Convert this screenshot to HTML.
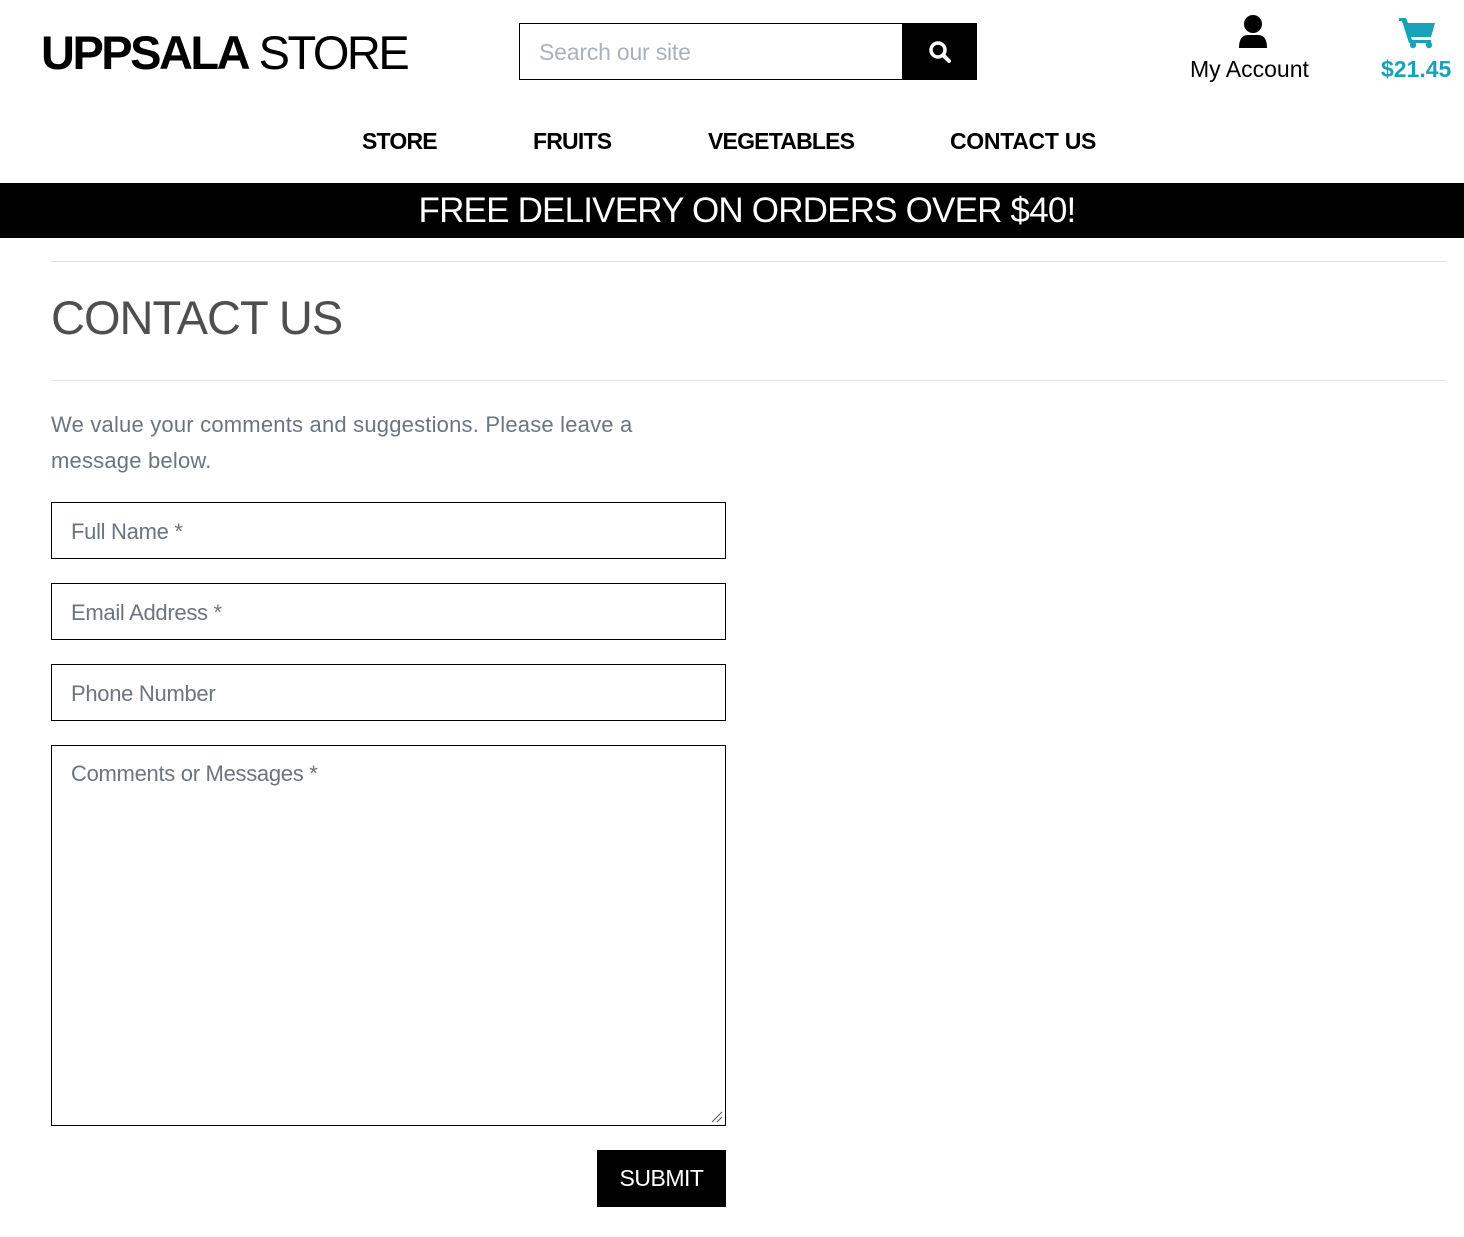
<!DOCTYPE html>
<html><head><meta charset="utf-8"><style>
*{margin:0;padding:0;box-sizing:border-box}
body{width:1464px;height:1237px;background:#fff;font-family:"Liberation Sans",sans-serif;position:relative;overflow:hidden}
.a{position:absolute;white-space:nowrap}
.nav{font-weight:bold;font-size:23px;color:#000;top:128px;letter-spacing:-0.8px}
.inp{position:absolute;left:51px;width:675px;border:1px solid #000;color:#6c757d;font-size:22px;padding-left:19px;letter-spacing:-0.3px}
</style></head><body>
<div class="a" style="left:41px;top:26px;font-size:47px;color:#000;letter-spacing:-2.5px;line-height:54px"><b>UPPSALA</b> STORE</div>
<div class="a" style="left:519px;top:23px;width:458px;height:57px;border:1px solid #000"></div>
<div class="a" style="left:539px;top:39px;font-size:23px;color:#a9b2bb;letter-spacing:-0.2px">Search our site</div>
<div class="a" style="left:902px;top:23px;width:75px;height:57px;background:#000">
<svg width="75" height="57"><circle cx="36" cy="27" r="7" fill="none" stroke="#fff" stroke-width="3.5"/><line x1="41" y1="32" x2="47" y2="38" stroke="#fff" stroke-width="4" stroke-linecap="round"/></svg></div>
<svg class="a" style="left:1236px;top:14px" width="34" height="36"><circle cx="17" cy="10" r="9" fill="#000"/><path d="M3 34 Q3 21 12 21 L22 21 Q31 21 31 34 Z" fill="#000"/></svg>
<div class="a" style="left:1190px;top:56px;font-size:23px;color:#000;letter-spacing:0">My Account</div>
<svg class="a" style="left:1398px;top:14px" width="40" height="36" fill="#17a2b8"><path d="M1 4 h7 l2 5 h27 l-4 14 h-20 l1 3 h19 v3 h-22 l-7-22 h-3z"/><circle cx="15" cy="31" r="3.2"/><circle cx="31" cy="31" r="3.2"/></svg>
<div class="a" style="left:1381px;top:56px;font-size:23px;color:#17a2b8;font-weight:bold;letter-spacing:0">$21.45</div>
<div class="a nav" style="left:362px">STORE</div>
<div class="a nav" style="left:533px">FRUITS</div>
<div class="a nav" style="left:708px">VEGETABLES</div>
<div class="a nav" style="left:950px;letter-spacing:-0.3px">CONTACT US</div>
<div class="a" style="left:0;top:183px;width:1464px;height:55px;background:#000;color:#fff;font-size:35px;text-align:center;line-height:56px;letter-spacing:-0.8px;padding-left:30px">FREE DELIVERY ON ORDERS OVER $40!</div>
<div class="a" style="left:51px;top:261px;width:1395px;height:1px;background:#e3e3e3"></div>
<div class="a" style="left:51px;top:290px;font-size:47px;color:#4f4f4f;letter-spacing:-1px">CONTACT US</div>
<div class="a" style="left:51px;top:380px;width:1395px;height:1px;background:#e3e3e3"></div>
<div class="a" style="left:51px;top:407px;font-size:22px;color:#6c757d;line-height:36px;letter-spacing:0.2px">We value your comments and suggestions. Please leave a<br>message below.</div>
<div class="inp" style="top:502px;height:57px;line-height:57px">Full Name *</div>
<div class="inp" style="top:583px;height:57px;line-height:57px">Email Address *</div>
<div class="inp" style="top:664px;height:57px;line-height:57px">Phone Number</div>
<div class="inp" style="top:745px;height:381px;padding-top:15px">Comments or Messages *</div>
<svg class="a" style="left:710px;top:1110px" width="14" height="14"><path d="M2 12 L12 2 M7 12 L12 7" stroke="#555" stroke-width="1"/></svg>
<div class="a" style="left:597px;top:1150px;width:129px;height:57px;background:#000;color:#fff;font-size:23px;text-align:center;line-height:57px;letter-spacing:-0.5px">SUBMIT</div>
</body></html>
